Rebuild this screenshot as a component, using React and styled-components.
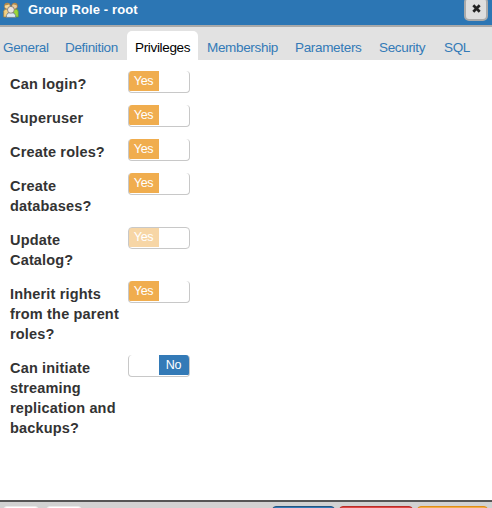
import React from "react";
import styled, { createGlobalStyle } from "styled-components";

const GlobalStyle = createGlobalStyle`
  * { box-sizing: border-box; }
  body { margin: 0; background: #fff; overflow: hidden; }
`;

const Dialog = styled.div`
  width: 492px;
  height: 508px;
  display: flex;
  flex-direction: column;
  overflow: hidden;
  background: #fff;
  font-family: "Liberation Sans", Arial, sans-serif;
`;

const TitleBar = styled.header`
  flex: none;
  height: 27px;
  display: flex;
  align-items: flex-start;
  padding: 0 4px 0 3px;
  background: #2c76b4;
  border-bottom: 2px solid #a9a9a9;
`;

const RoleIcon = styled.svg`
  flex: none;
  width: 16px;
  height: 16px;
  margin-top: 2px;
`;

const Title = styled.h1`
  flex: 1;
  margin: 1px 0 0 9px;
  font-size: 13px;
  line-height: 17px;
  letter-spacing: 0.13px;
  color: #fff;
`;

const CloseButton = styled.button`
  width: 24px;
  height: 24px;
  margin-top: -3px;
  padding: 0 0 2px 1px;
  display: flex;
  align-items: center;
  justify-content: center;
  background: #dedede;
  border: 2px solid #aaa;
  border-radius: 5px;
`;

const TabBar = styled.nav`
  flex: none;
  height: 33px;
  display: flex;
  align-items: flex-end;
  background: #e2e2e2;
`;

const Tab = styled.a`
  flex: none;
  width: ${(p) => p.$width}px;
  height: 29px;
  padding-left: ${(p) => (p.$first ? 3 : 8)}px;
  margin-right: ${(p) => (p.$active ? 1 : 0)}px;
  border-radius: 5px 5px 0 0;
  background: ${(p) => (p.$active ? "#fff" : "transparent")};
  color: ${(p) => (p.$active ? "#000" : "#337ab7")};
  font-size: 13.5px;
  letter-spacing: -0.33px;
  line-height: 33px;
  white-space: nowrap;
`;

const Form = styled.main`
  flex: 1;
  padding: 10px 0 0 10px;
`;

const Field = styled.div`
  display: flex;
  align-items: flex-start;
  margin-bottom: 14px;
`;

const Label = styled.label`
  width: 118px;
  padding-top: 4px;
  color: #333;
  font-size: 14.5px;
  font-weight: bold;
  line-height: 20px;
  letter-spacing: 0.17px;
  white-space: pre-line;
  margin-bottom: -4px;
`;

const Switch = styled.div`
  width: 62px;
  height: 22px;
  margin: 1px 0 -3px;
  display: flex;
  justify-content: ${(p) => (p.$on ? "flex-start" : "flex-end")};
  border: 1px solid #c8c8c8;
  border-top-width: ${(p) => (p.$disabled ? 1 : 0)}px;
  border-radius: 4px;
  background: #fff;
  overflow: hidden;
`;

const Handle = styled.span`
  width: 30px;
  height: ${(p) => (p.$disabled ? 19 : 20)}px;
  padding-right: 1px;
  background: ${(p) => (p.$on ? "#f0ad4e" : "#337ab7")};
  color: #fff;
  opacity: ${(p) => (p.$disabled ? 0.5 : 1)};
  font-size: 12.5px;
  letter-spacing: -0.3px;
  line-height: ${(p) => (p.$disabled ? 18 : 20)}px;
  text-align: center;
`;

const Footer = styled.footer`
  flex: none;
  height: 8px;
  display: flex;
  padding: 4px 3px 0 2px;
  background: #d2d2d2;
  border-top: 2px solid #555;
  overflow: hidden;
`;

const FooterButton = styled.button`
  flex: none;
  width: ${(p) => p.$width}px;
  height: 26px;
  margin-left: ${(p) => p.$gap}px;
  background: ${(p) => p.$fill};
  border: 1px solid ${(p) => p.$edge};
  border-radius: 4px;
`;

const tabs = [
  ["General", 57],
  ["Definition", 70],
  ["Privileges", 71],
  ["Membership", 88],
  ["Parameters", 84],
  ["Security", 65],
  ["SQL", 42],
];

const fields = [
  { label: "Can login?", on: true },
  { label: "Superuser", on: true },
  { label: "Create roles?", on: true },
  { label: "Create\ndatabases?", on: true },
  { label: "Update\nCatalog?", on: true, disabled: true },
  { label: "Inherit rights\nfrom the parent\nroles?", on: true },
  { label: "Can initiate\nstreaming\nreplication and\nbackups?", on: false },
];

const footerButtons = [
  { gap: 1, width: 36, fill: "#fff", edge: "#e9e9e9" },
  { gap: 7, width: 36, fill: "#fff", edge: "#e9e9e9" },
  { gap: 190, width: 63, fill: "#337ab7", edge: "#245580" },
  { gap: 4, width: 74, fill: "#e04845", edge: "#b92c28" },
  { gap: 4, width: 71, fill: "#f0ad4e", edge: "#e38d13" },
];

function GroupIcon() {
  return (
    <RoleIcon viewBox="0 0 16 16">
      <path d="M0.7 15V9.2Q1 7 3.6 7H6v8z" fill="#f2cf83" stroke="#a77c35" strokeWidth=".7" />
      <path d="M10 7h2.5q2.8.2 2.8 3v5H10z" fill="#9bd737" stroke="#5d9139" strokeWidth=".7" />
      <circle cx="4.3" cy="4.2" r="3" fill="#f5d99d" stroke="#9b7441" strokeWidth=".8" />
      <circle cx="11.5" cy="4.2" r="3" fill="#e8cc9b" stroke="#85613a" strokeWidth=".8" />
      <path d="M1.5 3.4Q2 .7 4.4.8l2.7 1.3-2.5.8zM9.1 2.3Q11-.1 13.3 1.2l1.4 2.4-2.8-.9z" fill="#b58c4e" />
      <path d="M3.4 15.4v-2q.4-3 4.5-3t4.7 3v2z" fill="#dce8f2" stroke="#667786" strokeWidth=".8" />
      <circle cx="7.9" cy="7.8" r="3.4" fill="#e9e5e0" stroke="#7c7570" strokeWidth=".8" />
    </RoleIcon>
  );
}

export default function App() {
  return (
    <Dialog>
      <GlobalStyle />
      <TitleBar>
        <GroupIcon />
        <Title>Group Role - root</Title>
        <CloseButton aria-label="Close">
          <svg width="9" height="9" viewBox="0 0 9 9">
            <path d="M1.3 1.3l6.4 6.4M7.7 1.3L1.3 7.7" stroke="#222" strokeWidth="2.7" />
          </svg>
        </CloseButton>
      </TitleBar>
      <TabBar>
        {tabs.map(([name, width], i) => (
          <Tab key={name} $width={width} $first={i === 0} $active={name === "Privileges"}>
            {name}
          </Tab>
        ))}
      </TabBar>
      <Form>
        {fields.map(({ label, on, disabled }) => (
          <Field key={label}>
            <Label>{label}</Label>
            <Switch $on={on} $disabled={disabled}>
              <Handle $on={on} $disabled={disabled}>{on ? "Yes" : "No"}</Handle>
            </Switch>
          </Field>
        ))}
      </Form>
      <Footer>
        {footerButtons.map((b, i) => (
          <FooterButton key={i} $gap={b.gap} $width={b.width} $fill={b.fill} $edge={b.edge} />
        ))}
      </Footer>
    </Dialog>
  );
}
